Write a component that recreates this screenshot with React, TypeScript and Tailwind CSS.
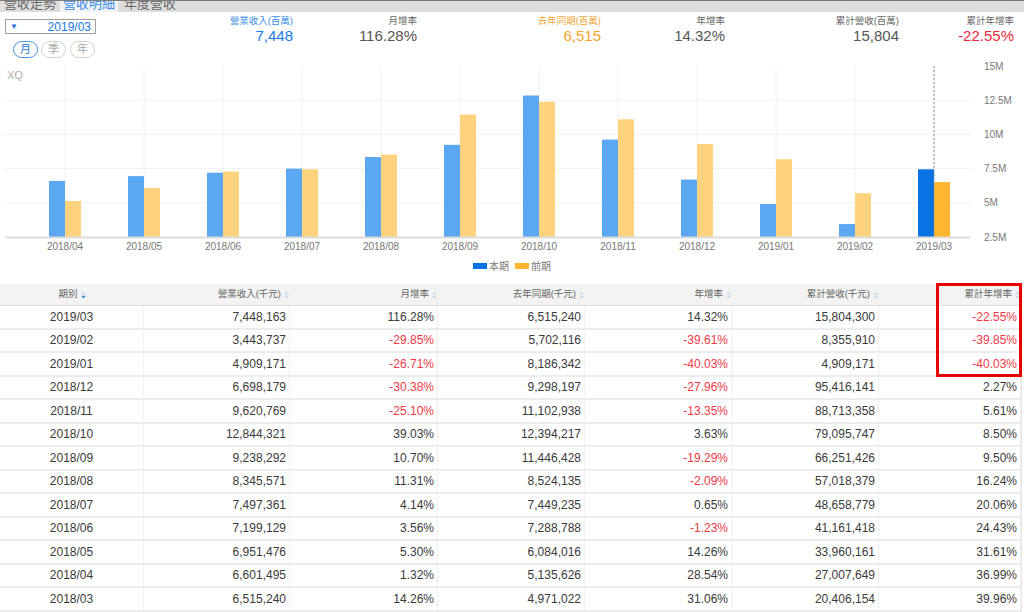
import React from "react";

const months = [
  "2018/04", "2018/05", "2018/06", "2018/07", "2018/08", "2018/09",
  "2018/10", "2018/11", "2018/12", "2019/01", "2019/02", "2019/03",
];
const cur = [6.601, 6.951, 7.199, 7.497, 8.346, 9.238, 12.844, 9.621, 6.698, 4.909, 3.444, 7.448];
const prev = [5.136, 6.084, 7.289, 7.449, 8.524, 11.446, 12.394, 11.103, 9.298, 8.186, 5.702, 6.515];

const rows = [
  ["2019/03", "7,448,163", "116.28%", "6,515,240", "14.32%", "15,804,300", "-22.55%"],
  ["2019/02", "3,443,737", "-29.85%", "5,702,116", "-39.61%", "8,355,910", "-39.85%"],
  ["2019/01", "4,909,171", "-26.71%", "8,186,342", "-40.03%", "4,909,171", "-40.03%"],
  ["2018/12", "6,698,179", "-30.38%", "9,298,197", "-27.96%", "95,416,141", "2.27%"],
  ["2018/11", "9,620,769", "-25.10%", "11,102,938", "-13.35%", "88,713,358", "5.61%"],
  ["2018/10", "12,844,321", "39.03%", "12,394,217", "3.63%", "79,095,747", "8.50%"],
  ["2018/09", "9,238,292", "10.70%", "11,446,428", "-19.29%", "66,251,426", "9.50%"],
  ["2018/08", "8,345,571", "11.31%", "8,524,135", "-2.09%", "57,018,379", "16.24%"],
  ["2018/07", "7,497,361", "4.14%", "7,449,235", "0.65%", "48,658,779", "20.06%"],
  ["2018/06", "7,199,129", "3.56%", "7,288,788", "-1.23%", "41,161,418", "24.43%"],
  ["2018/05", "6,951,476", "5.30%", "6,084,016", "14.26%", "33,960,161", "31.61%"],
  ["2018/04", "6,601,495", "1.32%", "5,135,626", "28.54%", "27,007,649", "36.99%"],
  ["2018/03", "6,515,240", "14.26%", "4,971,022", "31.06%", "20,406,154", "39.96%"],
];

const colW = ["w-[144px]", "w-[146px]", "w-[148px]", "w-[147px]", "w-[147px]", "w-[147px]", "w-[142px]"];
const headers = ["期別", "營業收入(千元)", "月增率", "去年同期(千元)", "年增率", "累計營收(千元)", "累計年增率"];

const stats = [
  { label: "營業收入(百萬)", value: "7,448", w: "w-[123px]", color: "text-[#1a7be6]", lcolor: "text-[#3b8ee8]" },
  { label: "月增率", value: "116.28%", w: "w-[124px]", color: "text-[#555]", lcolor: "text-[#666]" },
  { label: "去年同期(百萬)", value: "6,515", w: "w-[184px]", color: "text-[#f7a528]", lcolor: "text-[#f5a53a]" },
  { label: "年增率", value: "14.32%", w: "w-[124px]", color: "text-[#555]", lcolor: "text-[#666]" },
  { label: "累計營收(百萬)", value: "15,804", w: "w-[174px]", color: "text-[#555]", lcolor: "text-[#666]" },
  { label: "累計年增率", value: "-22.55%", w: "w-[115px]", color: "text-[#f0283a]", lcolor: "text-[#666]" },
];

const tabs = [
  { name: "營收走勢", w: "w-[60px]", active: false },
  { name: "營收明細", w: "w-[58px]", active: true },
  { name: "年度營收", w: "w-[64px]", active: false },
];

function SortIcon({ active }: { active?: boolean }) {
  return (
    <svg width="5" height="8" viewBox="0 0 5 8" className="ml-[3px] shrink-0">
      <path d="M0 3.3 L2.5 0.5 L5 3.3 Z" fill="#c9dcef" />
      <path d="M0 4.7 L2.5 7.5 L5 4.7 Z" fill={active ? "#4a90d9" : "#c9dcef"} />
    </svg>
  );
}

function Chart() {
  const base = 175;
  const k = 13.68;
  const y = (v: number) => base - (v - 2.5) * k;
  const cx = (i: number) => 65 + i * 79;
  const ticks = [
    { v: 15, t: "15M" },
    { v: 12.5, t: "12.5M" },
    { v: 10, t: "10M" },
    { v: 7.5, t: "7.5M" },
    { v: 5, t: "5M" },
    { v: 2.5, t: "2.5M" },
  ];
  return (
    <svg width="1024" height="220" className="block">
      <text x="7" y="17" fontSize="11" fill="#b0b0b0" fontFamily="Liberation Sans, sans-serif">XQ</text>
      {ticks.slice(1, 5).map((tk) => (
        <line key={tk.t} x1="5" x2="970" y1={y(tk.v)} y2={y(tk.v)} stroke="#f1f1f1" strokeWidth="1" />
      ))}
      {months.map((m, i) => (
        <line key={m} x1={cx(i)} x2={cx(i)} y1="4" y2={base} stroke="#f0f0f0" strokeWidth="1" />
      ))}
      {months.map((m, i) => {
        const last = i === months.length - 1;
        return (
          <g key={"b" + m}>
            <rect x={cx(i) - 16} y={y(cur[i])} width="16" height={base - y(cur[i])} fill={last ? "#0a73e4" : "#5ca7f1"} />
            <rect x={cx(i)} y={y(prev[i])} width="16" height={base - y(prev[i])} fill={last ? "#ffb731" : "#ffd37d"} />
          </g>
        );
      })}
      <line x1="5" x2="970" y1={base + 0.5} y2={base + 0.5} stroke="#dcdcdc" strokeWidth="2" />
      <line x1={cx(11)} x2={cx(11)} y1="4" y2={base} stroke="#7f8fa6" strokeWidth="1" strokeDasharray="2 2" />
      {ticks.map((tk) => (
        <text key={tk.t} x="984" y={y(tk.v) + 3.5} fontSize="10" fill="#777" fontFamily="Liberation Sans, sans-serif">{tk.t}</text>
      ))}
      {months.map((m, i) => (
        <text key={"l" + m} x={cx(i)} y="188" fontSize="10" fill="#777" textAnchor="middle" fontFamily="Liberation Sans, sans-serif">{m}</text>
      ))}
      <rect x="473" y="201" width="14" height="6" fill="#0a73e4" />
      <text x="489" y="207.5" fontSize="10" fill="#777" fontFamily="Noto Sans CJK TC, sans-serif">本期</text>
      <rect x="515" y="201" width="14" height="6" fill="#ffb731" />
      <text x="531" y="207.5" fontSize="10" fill="#777" fontFamily="Noto Sans CJK TC, sans-serif">前期</text>
    </svg>
  );
}

export default function App() {
  return (
    <div className="w-[1024px] h-[612px] overflow-hidden bg-white font-['Liberation_Sans','Noto_Sans_CJK_TC',sans-serif] text-[#333]">
      {/* tabs */}
      <div className="h-[12px] bg-[#dddddd] border-t border-[#7d7d7d] flex">
        {tabs.map((t) => (
          <div
            key={t.name}
            className={`${t.w} h-[11px] overflow-hidden flex justify-center ${t.active ? "bg-[#f3f3f3]" : ""}`}
          >
            <span
              className={`relative -top-[5px] whitespace-nowrap text-[13px] leading-[15px] ${
                t.active ? "text-[#3b8ee8]" : "text-[#666]"
              }`}
            >
              {t.name}
            </span>
          </div>
        ))}
      </div>

      {/* summary */}
      <div className="h-[50px] flex">
        <div className="w-[170px] pl-[5px] pt-[7px]">
          <div className="w-[91px] h-[15px] border border-[#a0a0a0] flex items-center justify-between px-[4px]">
            <span className="text-[8px] leading-none text-[#1a6fd8]">▼</span>
            <span className="text-[12px] leading-none text-[#1a7be6]">2019/03</span>
          </div>
          <div className="flex gap-[3px] mt-[7px] ml-[8px]">
            <div className="w-[25px] h-[17px] rounded-full border border-[#4a90e2] text-[11px] leading-[15px] text-center text-[#2a7ad8]">月</div>
            <div className="w-[25px] h-[17px] rounded-full border border-[#cfcfcf] text-[11px] leading-[15px] text-center text-[#aaa]">季</div>
            <div className="w-[25px] h-[17px] rounded-full border border-[#cfcfcf] text-[11px] leading-[15px] text-center text-[#aaa] ml-[1px]">年</div>
          </div>
        </div>
        {stats.map((s) => (
          <div key={s.label} className={`${s.w} text-right pt-[3px]`}>
            <div className={`text-[9.5px] leading-[11px] ${s.lcolor}`}>{s.label}</div>
            <div className={`text-[15px] leading-[18px] mt-[1px] ${s.color}`}>{s.value}</div>
          </div>
        ))}
      </div>

      <Chart />

      {/* table */}
      <div className="relative mt-[2px] w-[1022px] border-r border-[#e4e4e4]">
        <div className="flex h-[22px] bg-[#f3f3f3] border-b border-[#dedede] text-[9.5px] text-[#666]">
          {headers.map((h, i) => (
            <div
              key={h}
              className={`${colW[i]} flex items-center ${i === 0 ? "justify-center" : "justify-end pr-[1px]"}`}
            >
              <span>{h}</span>
              <SortIcon active={i === 0} />
            </div>
          ))}
        </div>
        {rows.map((r) => (
          <div key={r[0]} className="flex h-[23.5px] border-b-2 border-[#ececec] text-[12px]">
            {r.map((c, i) => (
              <div
                key={i}
                className={`${colW[i]} flex items-center border-r border-[#f0f0f0] ${
                  i === 0 ? "justify-center" : "justify-end pr-[3px]"
                } ${c.startsWith("-") ? "text-[#f23a46]" : "text-[#3a3a3a]"}`}
              >
                {c}
              </div>
            ))}
          </div>
        ))}
        <div className="absolute left-[936px] top-[-1px] w-[86px] h-[94px] border-[3px] border-[#e60000]" />
      </div>
    </div>
  );
}
